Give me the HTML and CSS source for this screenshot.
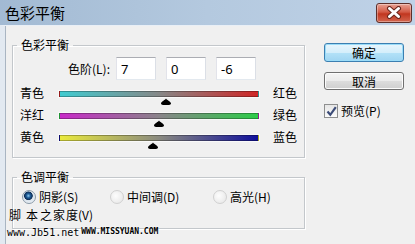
FILE: index.html
```html
<!DOCTYPE html>
<html>
    <head>
        <title>色彩平衡</title>
        <meta charset="utf-8">
        <link rel="stylesheet" href="styles.css">
    </head>
    <body>
        <div class="window">
            <div class="titleBar">
                <span class="titleText">色彩平衡</span>
                <span class="closeBtn">
                    <svg width="16" height="13" viewBox="0 0 16 13">
                        <path d="M3.5 2.5 L12.5 10.5 M12.5 2.5 L3.5 10.5" stroke="#6a261c" stroke-width="5" stroke-linecap="round"/>
                        <path d="M3.5 2.5 L12.5 10.5 M12.5 2.5 L3.5 10.5" stroke="#fff" stroke-width="3" stroke-linecap="round"/>
                    </svg>
                </span>
            </div>
            <div class="client">
                <div class="mainCol">
                    <fieldset class="group balanceGroup">
                        <legend>色彩平衡</legend>
                        <div class="levelRow">
                            <span class="levelLabel">色阶(L):</span>
                            <input class="levelIn" type="text" value="7">
                            <input class="levelIn" type="text" value="0">
                            <input class="levelIn" type="text" value="-6">
                        </div>
                        <div class="sliderRow">
                            <span class="sideLabel">青色</span>
                            <div class="track">
                                <div class="bar cyanRed"></div>
                                <svg class="thumb" style="left: 53.5%" width="11" height="7" viewBox="0 0 11 7"><path d="M5.5 0.5 C6.5 2.2 10.5 3.8 10.5 5.3 C10.5 6.4 9.6 7 8.5 7 L2.5 7 C1.4 7 0.5 6.4 0.5 5.3 C0.5 3.8 4.5 2.2 5.5 0.5 Z"/></svg>
                            </div>
                            <span class="sideLabel rightLabel">红色</span>
                        </div>
                        <div class="sliderRow">
                            <span class="sideLabel">洋红</span>
                            <div class="track">
                                <div class="bar magentaGreen"></div>
                                <svg class="thumb" style="left: 50%" width="11" height="7" viewBox="0 0 11 7"><path d="M5.5 0.5 C6.5 2.2 10.5 3.8 10.5 5.3 C10.5 6.4 9.6 7 8.5 7 L2.5 7 C1.4 7 0.5 6.4 0.5 5.3 C0.5 3.8 4.5 2.2 5.5 0.5 Z"/></svg>
                            </div>
                            <span class="sideLabel rightLabel">绿色</span>
                        </div>
                        <div class="sliderRow">
                            <span class="sideLabel">黄色</span>
                            <div class="track">
                                <div class="bar yellowBlue"></div>
                                <svg class="thumb" style="left: 47%" width="11" height="7" viewBox="0 0 11 7"><path d="M5.5 0.5 C6.5 2.2 10.5 3.8 10.5 5.3 C10.5 6.4 9.6 7 8.5 7 L2.5 7 C1.4 7 0.5 6.4 0.5 5.3 C0.5 3.8 4.5 2.2 5.5 0.5 Z"/></svg>
                            </div>
                            <span class="sideLabel rightLabel">蓝色</span>
                        </div>
                    </fieldset>
                    <fieldset class="group toneGroup">
                        <legend>色调平衡</legend>
                        <div class="radioRow">
                            <label class="radio"><span class="radioDot on"></span>阴影(S)</label>
                            <label class="radio"><span class="radioDot"></span>中间调(D)</label>
                            <label class="radio"><span class="radioDot"></span>高光(H)</label>
                        </div>
                        <div class="keepRow">度(V)</div>
                    </fieldset>
                </div>
                <div class="sideCol">
                    <button class="btn btnDefault">确定</button>
                    <button class="btn btnCancel">取消</button>
                    <label class="preview">
                        <span class="checkBox">
                            <svg width="11" height="11" viewBox="0 0 11 11"><path d="M1.5 5.5 L4.3 8.8 L9.8 1.2" fill="none" stroke="#3c4c78" stroke-width="2.2"/></svg>
                        </span>预览(P)
                    </label>
                </div>
            </div>
            <div class="watermark">
                <div class="wmLine"><span class="wmChar first">脚</span><span class="wmChar second">本</span><span class="wmChar third">之</span><span>家</span></div>
                <div class="wmLine wmSite">www.Jb51.net<span class="wmSmall">WWW.MISSYUAN.COM</span></div>
            </div>
        </div>
    </body>
</html>
```

FILE: styles.css
```css
* {
    box-sizing: border-box;
}
body {
    margin: 0;
    background: #f0f0f0;
    font-family: "Noto Sans CJK SC", "Noto Sans", sans-serif;
    font-size: 12px;
    color: #000;
}
.window {
    position: relative;
    width: 415px;
    height: 244px;
    overflow: hidden;
}
.titleBar {
    height: 25px;
    display: flex;
    align-items: center;
    justify-content: space-between;
    padding: 0 3px 0 5px;
    background: linear-gradient(to right, #a2bad3, #b4c9df 50%, #bfd2e7);
}
.titleText {
    font-size: 15px;
    line-height: 25px;
}
.closeBtn {
    width: 36px;
    height: 20px;
    display: flex;
    align-items: center;
    justify-content: center;
    border: 1px solid #5e2f2a;
    border-radius: 3px;
    background: linear-gradient(#e8a294, #d35a45 45%, #c1361f 55%, #d3664f);
    box-shadow: inset 0 0 0 1px rgba(255, 255, 255, 0.35);
}
.client {
    display: flex;
    height: 219px;
    border-left: 5px solid #e2e9f1;
    border-top: 1px solid #e9eff6;
    box-shadow: inset 1px 0 0 #a9b5c2;
}
.mainCol {
    width: 293px;
    margin-left: 7px;
}
.group {
    margin: 0;
    min-width: 0;
    border: 1px solid #c3c7cb;
    box-shadow: inset 1px 1px 0 #fff, 1px 1px 0 #fff;
    padding: 4px 7px 7px 7px;
}
.group legend {
    margin-left: -3px;
    padding: 0 4px;
    line-height: 16px;
}
.balanceGroup {
    margin-top: 11px;
}
.toneGroup {
    margin-top: 11px;
    padding-bottom: 5px;
}
.levelRow {
    display: flex;
    align-items: center;
    margin: 0 0 4px 42px;
    height: 23px;
}
.levelLabel {
    width: 48px;
    margin-right: 6px;
    text-align: right;
}
.levelIn {
    width: 40px;
    height: 23px;
    margin: 0 10px 0 0;
    padding: 0 4px;
    border: 1px solid;
    border-color: #abadb3 #dbdfe6 #e3e9ef #e2e3ea;
    background: #fff;
    font-family: "Noto Sans", sans-serif;
    font-size: 13px;
    color: #000;
}
.sliderRow {
    display: grid;
    grid-template-columns: 39px 200px auto;
    height: 22px;
}
.sideLabel {
    line-height: 18px;
}
.rightLabel {
    margin-left: 14px;
}
.track {
    position: relative;
}
.bar {
    height: 6px;
    margin-top: 7px;
    border: 1px solid rgba(0, 0, 0, 0.28);
    box-shadow: 0 0 0 1px rgba(255, 255, 255, 0.6);
}
.cyanRed {
    background: linear-gradient(to right, #3fcbd0, #868888 50%, #cf2626);
}
.magentaGreen {
    background: linear-gradient(to right, #c829c8, #8a848a 50%, #2ccc48);
}
.yellowBlue {
    background: linear-gradient(to right, #eaea3c, #8a8a80 50%, #10109c);
}
.thumb {
    position: absolute;
    top: 14px;
    transform: translateX(-50%);
}
.radioRow {
    display: grid;
    grid-template-columns: 88px 103px auto;
    padding-left: 2px;
    height: 16px;
}
.radio {
    display: flex;
    align-items: center;
    gap: 3px;
    line-height: 16px;
}
.radioDot {
    width: 14px;
    height: 14px;
    border-radius: 50%;
    border: 1px solid #d0d0d0;
    background: radial-gradient(circle at 40% 40%, #fdfdfd, #e4e4e4);
}
.radioDot.on {
    border-color: #8a9aa8;
    background: radial-gradient(circle at 45% 40%, #8cc8ee 0, #1e5e9a 2px, #0d2d55 4px, #d9e3ec 4.6px, #f6f8fa);
}
.keepRow {
    margin-top: 2px;
    padding-left: 46px;
    line-height: 16px;
}
.sideCol {
    display: flex;
    flex-direction: column;
    width: 80px;
    margin-left: 19px;
    padding-top: 17px;
}
.btn {
    width: 80px;
    padding: 0;
    border-radius: 3px;
    font-family: inherit;
    font-size: 12px;
    color: #000;
}
.btnDefault {
    height: 19px;
    border: 1px solid #3c7fb1;
    background: linear-gradient(#e9f6fd, #d4eefb 50%, #b4e2f8 50%, #9fd5f2);
    box-shadow: inset 0 0 0 1px #9bdcf8;
}
.btnCancel {
    height: 18px;
    margin-top: 10px;
    border: 1px solid #707070;
    background: linear-gradient(#f4f4f4, #ebebeb 50%, #dddddd 50%, #cfcfcf);
    box-shadow: inset 0 0 0 1px #fcfcfc;
}
.preview {
    display: flex;
    align-items: center;
    gap: 3px;
    margin-top: 14px;
    line-height: 14px;
}
.checkBox {
    width: 14px;
    height: 14px;
    display: flex;
    align-items: center;
    justify-content: center;
    border: 1px solid #8e8f8f;
    background: linear-gradient(#e6e6e6, #fbfbfb);
}
.watermark {
    position: absolute;
    left: 9px;
    top: 207px;
}
.wmLine {
    line-height: 16px;
    font-size: 12px;
    text-shadow: 0 0 2px #fff;
}
.wmChar.first {
    margin-right: 5px;
}
.wmChar.second {
    margin-right: 2px;
}
.wmChar.third {
    margin-right: 1px;
}
.wmSite {
    margin: 4px 0 0 -2px;
    font-family: "DejaVu Sans Mono", monospace;
    font-size: 10px;
    line-height: 12px;
    display: flex;
    align-items: flex-start;
}
.wmSmall {
    margin-left: 2px;
    font-size: 8px;
    line-height: 9px;
    font-weight: bold;
}
```
